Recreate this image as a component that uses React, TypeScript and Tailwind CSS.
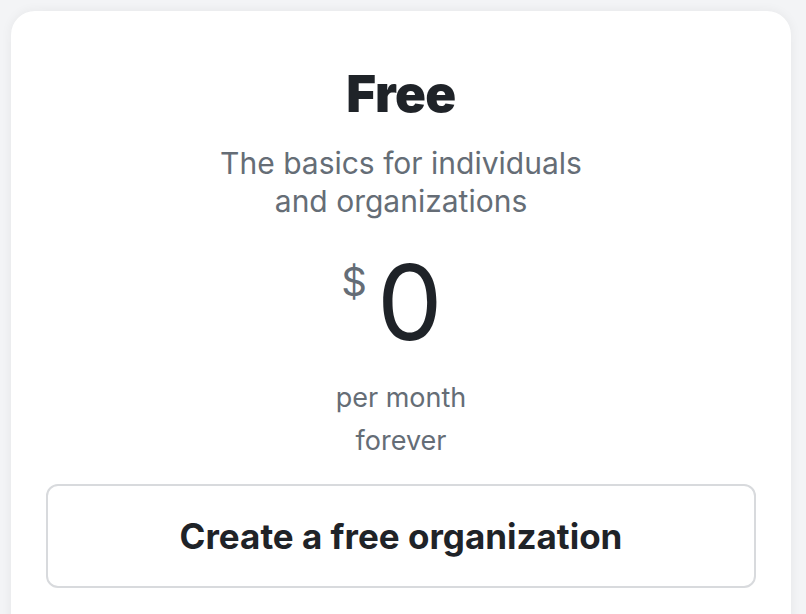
export default function App() {
  return (
    <div
      className="h-[614px] w-[806px] overflow-hidden bg-[#f3f4f6] pl-[11px] pr-[15px] pt-[11px]"
      style={{ fontFamily: "Inter, 'Noto Sans', sans-serif" }}
    >
      <div className="flex h-[640px] flex-col items-center rounded-t-[24px] bg-white px-[35px] pt-[57px] shadow-[0_0_12px_rgba(0,0,0,0.06)]">
        <h2 className="text-[51px] font-black leading-[1] tracking-[-0.5px] text-[#1f2328]">Free</h2>
        <p className="mt-[25px] text-center text-[30px] leading-[38px] text-[#656d76]">
          The basics for individuals
          <br />
          and organizations
        </p>
        <div className="mt-[30px] flex items-start pr-[18px] text-[#1f2328]">
          <span className="mr-[10px] mt-[12px] text-[40px] leading-[1] text-[#656d76]">$</span>
          <span className="text-[104px] font-normal leading-[1]">0</span>
        </div>
        <p className="mt-[22px] text-[27px] leading-[43px] text-[#656d76]">per month</p>
        <p className="text-[27px] leading-[43px] text-[#656d76]">forever</p>
        <button
          type="button"
          className="mt-[22px] flex h-[104px] w-full shrink-0 items-center justify-center rounded-[12px] border-2 border-[#d8dadd] bg-white text-[35px] font-bold text-[#1f2328]"
        >
          Create a free organization
        </button>
      </div>
    </div>
  );
}
